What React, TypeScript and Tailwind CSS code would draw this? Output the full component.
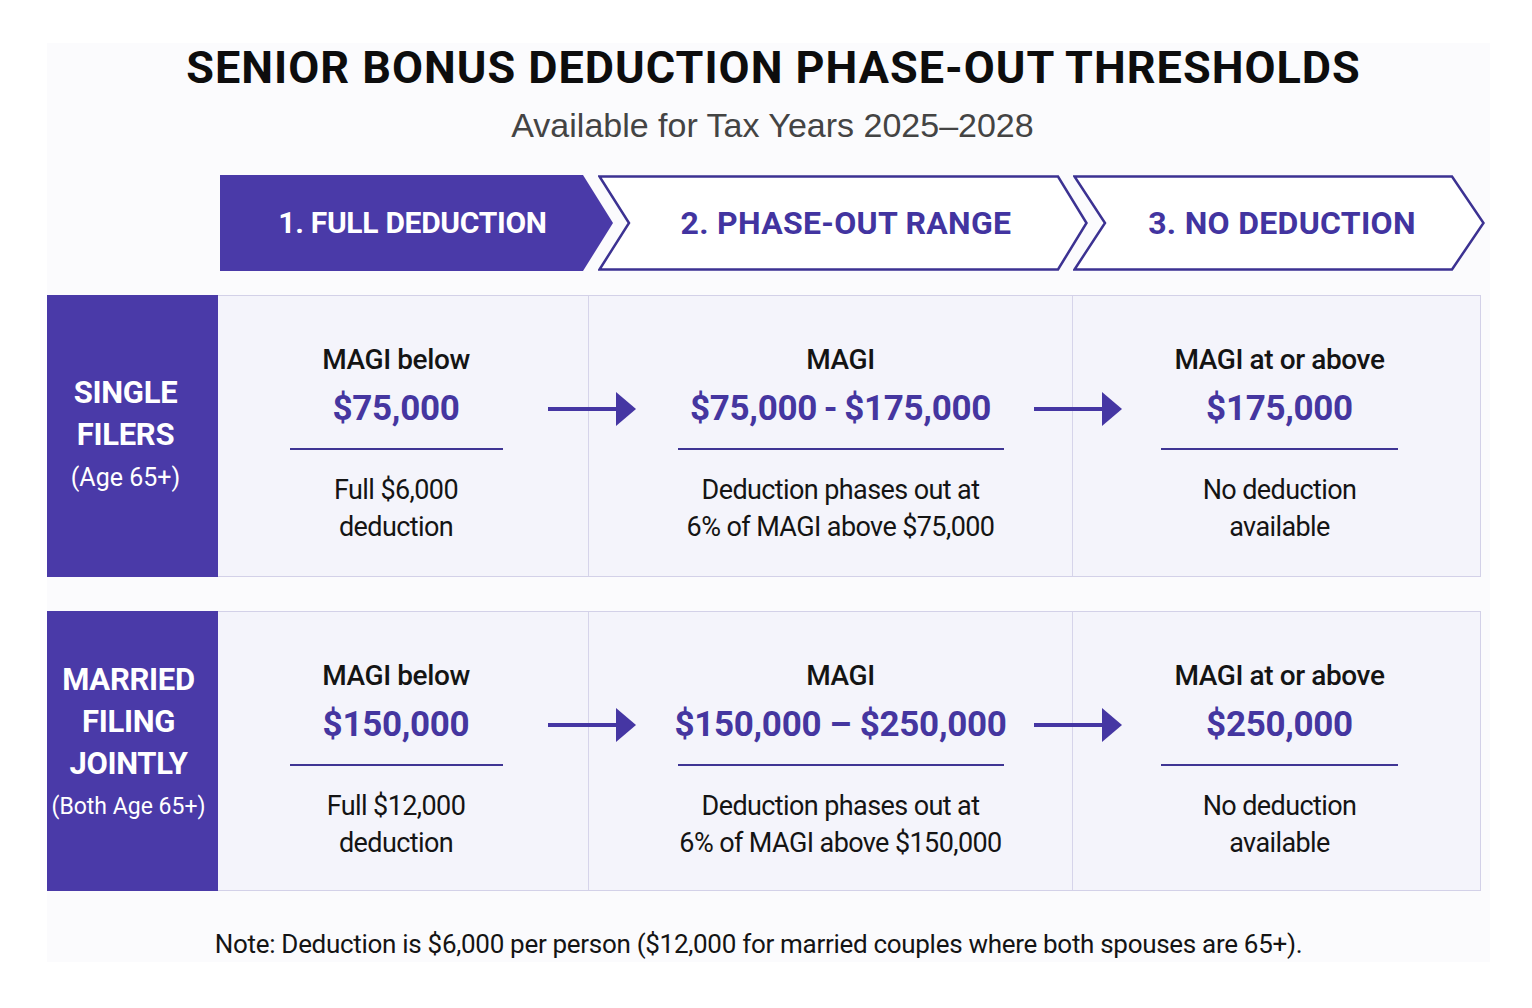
import React from 'react';

const rows = [
  {
    label: ['SINGLE', 'FILERS'],
    sub: '(Age 65+)',
    cells: [
      { top: 'MAGI below', value: '$75,000', text: ['Full $6,000', 'deduction'] },
      { top: 'MAGI', value: '$75,000\u2009-\u2009$175,000', text: ['Deduction phases out at', '6% of MAGI above $75,000'] },
      { top: 'MAGI at or above', value: '$175,000', text: ['No deduction', 'available'] },
    ],
    lines: ['w-[213px]', 'w-[326px]', 'w-[237px]'],
  },
  {
    label: ['MARRIED', 'FILING', 'JOINTLY'],
    sub: '(Both Age 65+)',
    cells: [
      { top: 'MAGI below', value: '$150,000', text: ['Full $12,000', 'deduction'] },
      { top: 'MAGI', value: '$150,000 – $250,000', text: ['Deduction phases out at', '6% of MAGI above $150,000'] },
      { top: 'MAGI at or above', value: '$250,000', text: ['No deduction', 'available'] },
    ],
    lines: ['w-[213px]', 'w-[326px]', 'w-[237px]'],
  },
];

function Arrow({ className }: { className: string }) {
  return (
    <svg className={className} width="88" height="34" viewBox="0 0 88 34">
      <rect x="0" y="15" width="72" height="4" fill="#4536a3" />
      <polygon points="68,0 88,17 68,34" fill="#4536a3" />
    </svg>
  );
}

function Step({ n }: { n: number }) {
  if (n === 1) {
    return (
      <div className="relative w-[393px] h-[96px] flex items-center justify-center">
        <svg className="absolute inset-0" width="393" height="96" viewBox="0 0 393 96">
          <polygon points="0,0 363,0 393,48 363,96 0,96" fill="#4a3aa8" />
        </svg>
        <span className="relative text-white font-bold text-[30px] tracking-[-0.3px] leading-none pr-[8px]">1. FULL DEDUCTION</span>
      </div>
    );
  }
  const w = n === 2 ? 490 : 412;
  const label = n === 2 ? '2. PHASE-OUT RANGE' : '3. NO DEDUCTION';
  const pts =
    n === 2
      ? '1.5,1.5 460,1.5 488.5,48 460,94.5 1.5,94.5 31,48'
      : '1.5,1.5 379,1.5 410.5,48 379,94.5 1.5,94.5 32,48';
  return (
    <div className={(n === 2 ? 'w-[490px]' : 'w-[412px]') + ' relative h-[96px] -ml-[15px] flex items-center justify-center'}>
      <svg className="absolute inset-0" width={w} height="96" viewBox={`0 0 ${w} 96`}>
        <polygon points={pts} fill="#ffffff" stroke="#3c3292" strokeWidth="2.5" strokeLinejoin="miter" />
      </svg>
      <span className="relative text-[#4234a0] font-bold text-[32px] tracking-[0.3px] leading-none pl-[6px]">{label}</span>
    </div>
  );
}

export default function App() {
  return (
    <div className="w-[1532px] h-[1008px] bg-white pt-[43px] pl-[47px] font-['Roboto',sans-serif] text-[#141414]">
      <div className="w-[1443px] h-[919px] bg-[#fbfbfd]">
        <h1 className="text-center font-bold text-[45px] leading-[50px] tracking-[1px] text-[#0d0d0d] pl-[10px]">
          SENIOR BONUS DEDUCTION PHASE-OUT THRESHOLDS
        </h1>
        <p className="mt-[12px] text-center text-[34px] leading-[40px] text-[#444444] font-['Liberation_Sans',Arial,sans-serif] pl-[8px]">
          Available for Tax Years 2025–2028
        </p>

        <div className="mt-[30px] pl-[173px] flex">
          <Step n={1} />
          <Step n={2} />
          <Step n={3} />
        </div>

        <div className="mt-[24px] flex flex-col gap-[34px] w-[1434px]">
          {rows.map((row, ri) => (
            <div
              key={ri}
              className={(ri === 0 ? 'h-[282px]' : 'h-[280px]') + ' relative grid grid-cols-[170px_370px_484px_410px] border border-[#d3d1e8] bg-[#f4f4fb]'}
            >
              <div
                className={
                  (ri === 0 ? 'pr-[14px] ' : 'pb-[14px] pr-[8px] ') +
                  'bg-[#4a3aa8] -my-px -ml-px flex flex-col items-center justify-center text-white text-center'
                }
              >
                {row.label.map((l) => (
                  <div key={l} className="font-bold text-[31px] tracking-[-0.3px] leading-[42px]">{l}</div>
                ))}
                <div className={(ri === 0 ? 'text-[25px]' : 'text-[23px]') + ' leading-[44px] whitespace-nowrap'}>{row.sub}</div>
              </div>
              {row.cells.map((c, ci) => (
                <div
                  key={ci}
                  className={
                    (ci === 0 ? 'pr-[14px] ' : ci === 1 ? 'pl-[20px] border-l border-[#d6d4ea] ' : 'pl-[4px] border-l border-[#d6d4ea] ') +
                    'flex flex-col items-center pt-[45px] text-center'
                  }
                >
                  <div className="text-[28px] tracking-[-0.4px] leading-[37px] font-medium">{c.top}</div>
                  <div className="mt-[7px] font-bold text-[35px] tracking-[-0.3px] leading-[48px] text-[#4536a0] whitespace-nowrap">{c.value}</div>
                  <div className={row.lines[ci] + ' mt-[15px] h-[2px] bg-[#3f3594]'} />
                  <div className="mt-[22px] text-[27px] tracking-[-0.6px] leading-[37px]">
                    {c.text.map((t) => (
                      <div key={t}>{t}</div>
                    ))}
                  </div>
                </div>
              ))}
              <Arrow className="absolute left-[500px] top-[96px]" />
              <Arrow className="absolute left-[986px] top-[96px]" />
            </div>
          ))}
        </div>

        <p className="mt-[35px] text-center text-[26px] tracking-[-0.3px] leading-[36px] pr-[20px]">
          Note: Deduction is $6,000 per person ($12,000 for married couples where both spouses are 65+).
        </p>
      </div>
    </div>
  );
}
